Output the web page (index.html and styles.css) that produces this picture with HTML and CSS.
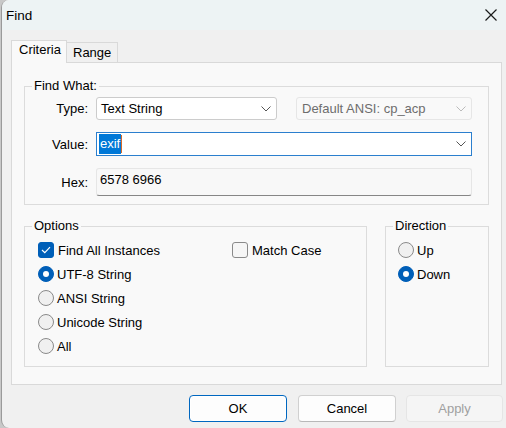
FILE: index.html
```html
<!DOCTYPE html>
<html>
<head>
<meta charset="utf-8">
<link rel="stylesheet" href="styles.css">
</head>
<body>
<div class="window">
  <div class="titlebar">
    <span class="title">Find</span>
    <svg class="close" width="12" height="12" viewBox="0 0 12 12"><path d="M0.5 0.5 L11.5 11.5 M11.5 0.5 L0.5 11.5" stroke="#1a1a1a" stroke-width="1.2" fill="none"/></svg>
  </div>
  <div class="body">
    <div class="tabs">
      <div class="tab active">Criteria</div>
      <div class="tab">Range</div>
    </div>
    <div class="panel">
      <div class="group findwhat">
        <span class="legend">Find What:</span>
        <div class="row r1">
          <span class="lbl">Type:</span>
          <div class="select type"><span>Text String</span><svg class="chev" width="10" height="6" viewBox="0 0 10 6"><path d="M0.5 0.5 L5 5 L9.5 0.5" stroke="#555" stroke-width="1" fill="none"/></svg></div>
          <div class="select enc disabled"><span>Default ANSI: cp_acp</span><svg class="chev" width="10" height="6" viewBox="0 0 10 6"><path d="M0.5 0.5 L5 5 L9.5 0.5" stroke="#bbb" stroke-width="1" fill="none"/></svg></div>
        </div>
        <div class="row r2">
          <span class="lbl">Value:</span>
          <div class="combo"><span class="sel">exif</span><span class="caret"></span><svg class="chev" width="10" height="6" viewBox="0 0 10 6"><path d="M0.5 0.5 L5 5 L9.5 0.5" stroke="#555" stroke-width="1" fill="none"/></svg></div>
        </div>
        <div class="row r3">
          <span class="lbl">Hex:</span>
          <div class="hexbox">6578 6966</div>
        </div>
      </div>
      <div class="lower">
        <div class="group options">
          <span class="legend">Options</span>
          <div class="optgrid">
            <div class="opt"><span class="cb checked"><svg width="10" height="8" viewBox="0 0 10 8"><path d="M1 4 L3.8 6.6 L9 1.2" stroke="#fff" stroke-width="1.2" fill="none"/></svg></span>Find All Instances</div>
            <div class="opt"><span class="cb"></span>Match Case</div>
            <div class="opt"><span class="rb on"></span>UTF-8 String</div>
            <div></div>
            <div class="opt"><span class="rb"></span>ANSI String</div>
            <div></div>
            <div class="opt"><span class="rb"></span>Unicode String</div>
            <div></div>
            <div class="opt"><span class="rb"></span>All</div>
          </div>
        </div>
        <div class="group direction">
          <span class="legend">Direction</span>
          <div class="opt"><span class="rb"></span>Up</div>
          <div class="opt"><span class="rb on"></span>Down</div>
        </div>
      </div>
    </div>
    <div class="buttons">
      <div class="btn ok">OK</div>
      <div class="btn">Cancel</div>
      <div class="btn disabled">Apply</div>
    </div>
  </div>
</div>
</body>
</html>
```
FILE: styles.css
```css
html, body {
  margin: 0;
  padding: 0;
  width: 506px;
  height: 428px;
  overflow: hidden;
  background: #c8c8c8;
  font-family: "Liberation Sans", Arial, sans-serif;
  font-size: 13px;
  color: #000;
}
.window {
  margin-left: 1px;
  width: 505px;
  height: 428px;
  border-left: 1px solid #9a9a9a;
  border-radius: 8px 0 0 8px;
  background: #f0f0f0;
  overflow: hidden;
  box-sizing: border-box;
}
.titlebar {
  height: 30px;
  background: #edf3f4;
  display: flex;
  align-items: center;
  justify-content: space-between;
  padding: 0 9px 0 4px;
}
.title {
  font-size: 13.5px;
}
.close { display: block; }
.body {
  padding: 10px 0 0 9px;
}
.tabs {
  display: flex;
  align-items: flex-end;
  height: 22px;
  position: relative;
  z-index: 2;
}
.tab {
  box-sizing: border-box;
  border: 1px solid #d9d9d9;
  border-bottom: none;
  background: #f0f0f0;
  height: 20px;
  padding: 0 6px;
  line-height: 19px;
  margin-left: -1px;
}
.tab.active {
  background: #f9f9f9;
  height: 23px;
  margin-bottom: -1px;
  margin-left: 0;
  line-height: 18px;
  padding: 0 6px 0 7px;
  width: 56px;
}
.panel {
  box-sizing: border-box;
  width: 491px;
  height: 323px;
  border: 1px solid #d9d9d9;
  background: #f9f9f9;
  padding: 23px 12px 0 12px;
}
.group {
  box-sizing: border-box;
  border: 1px solid #dcdcdc;
  position: relative;
}
.legend {
  position: absolute;
  top: -9px;
  left: 7px;
  padding: 0 2px;
  background: #f9f9f9;
  line-height: 16px;
}
.findwhat {
  width: 465px;
  height: 119px;
  padding: 10px 0 0 0;
}
.row {
  display: flex;
  align-items: center;
}
.lbl {
  width: 63px;
  text-align: right;
  margin-right: 8px;
}
.r2 { margin-top: 12px; }
.r3 { margin-top: 12px; }
.select {
  box-sizing: border-box;
  height: 23px;
  border: 1px solid #cccccc;
  border-radius: 3px;
  background: #fff;
  display: flex;
  align-items: center;
  justify-content: space-between;
  padding: 0 5px 0 4px;
}
.select.type { width: 181px; }
.select.enc {
  width: 176px;
  margin-left: 19px;
  background: #f9f9f9;
  border-color: #e6e6e6;
  color: #6d6d6d;
  padding-left: 5px;
}
.chev { display: block; }
.combo {
  box-sizing: border-box;
  width: 376px;
  height: 24px;
  border: 1px solid #2b7fce;
  background: #fff;
  display: flex;
  align-items: center;
  padding: 0 5px 0 2px;
}
.sel {
  background: #0078d7;
  color: #fff;
  line-height: 20px;
  padding: 0 1px;
}
.caret {
  width: 1px;
  height: 18px;
  background: #d56a2a;
  flex: none;
}
.combo .chev { margin-left: auto; }
.hexbox {
  box-sizing: border-box;
  width: 376px;
  height: 28px;
  border: 1px solid #e6e6e6;
  border-bottom: 1px solid #868686;
  border-radius: 3px;
  background: #f8f8f8;
  padding: 2px 0 0 3px;
  line-height: 18px;
}
.lower {
  display: flex;
  margin-top: 21px;
  gap: 18px;
}
.options {
  width: 343px;
  height: 141px;
  padding: 11px 0 0 13px;
}
.optgrid {
  display: grid;
  grid-template-columns: 194px 1fr;
  grid-auto-rows: 24px;
}
.opt {
  display: flex;
  align-items: center;
  height: 24px;
}
.direction {
  width: 104px;
  height: 141px;
  padding: 11px 0 0 12px;
}
.cb {
  box-sizing: border-box;
  width: 16px;
  height: 16px;
  border: 1px solid #8a8a8a;
  border-radius: 3px;
  background: #f6f6f6;
  margin-right: 4px;
  display: flex;
  align-items: center;
  justify-content: center;
  flex: none;
}
.cb.checked {
  background: #005fb8;
  border-color: #005fb8;
}
.rb {
  box-sizing: border-box;
  width: 16px;
  height: 16px;
  border: 1px solid #8a8a8a;
  border-radius: 50%;
  background: #f0f0f0;
  margin-right: 3px;
  flex: none;
  display: flex;
  align-items: center;
  justify-content: center;
}
.rb.on {
  background: #005fb8;
  border-color: #005fb8;
}
.rb.on::after {
  content: "";
  width: 6px;
  height: 6px;
  border-radius: 50%;
  background: #fff;
}
.buttons {
  display: flex;
  margin-top: 10px;
  margin-left: 178px;
}
.btn {
  box-sizing: border-box;
  width: 98px;
  height: 27px;
  border: 1px solid #d0d0d0;
  border-bottom-color: #b8b8b8;
  border-radius: 4px;
  background: #fdfdfd;
  display: flex;
  align-items: center;
  justify-content: center;
  margin-right: 11px;
}
.btn + .btn.disabled { margin-left: -1px; }
.btn.ok {
  border: 1px solid #0067c0;
  box-shadow: inset 0 0 0 1px #ffffff;
}
.btn.disabled {
  width: 97px;
  margin-right: 0;
  background: #f5f5f5;
  border-color: #e5e5e5;
  color: #a0a0a0;
}
```
